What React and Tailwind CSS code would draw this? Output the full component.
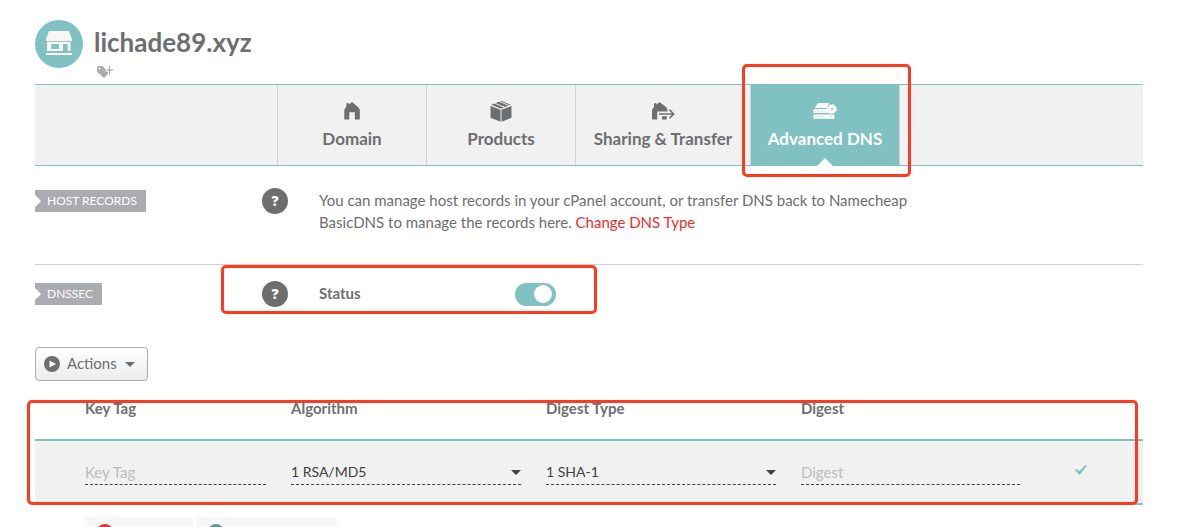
import React, { useState } from "react";

const StoreIcon = () => (
  <svg viewBox="0 0 48 48" className="size-12 shrink-0" aria-hidden="true">
    <circle cx="24" cy="24" r="24" fill="#80c2c1" />
    <g fill="#f9f6f3">
      <path d="M14 11h20l3 8.500v1.200q-1.100 1.300-2.200 0-1.100 1.300-2.200 0-1.100 1.300-2.200 0-1.100 1.300-2.200 0-1.100 1.300-2.200 0-1.100 1.300-2.200 0-1.100 1.300-2.200 0-1.100 1.300-2.200 0-1.100 1.300-2.200 0-1.100 1.300-2.200 0-1.100 1.300-2.200 0-1.100 1.300-1.800 0v-1.200z" />
      <path fillRule="evenodd" d="M12 22h23.500v9H12zM16.300 24v5H24v-5zM28 24v7h4.700v-7z" />
      <path d="M11 33h26v2H11z" />
    </g>
  </svg>
);

const TagPlusIcon = () => (
  <svg viewBox="0 0 17 12" className="h-3 w-[17px]" aria-hidden="true">
    <path fill="#abacb0" fillRule="evenodd" d="M0 1 1 0h4.500l2.800 2.800L11 6.500v1.300L7 12 .5 6.200 0 5zM2.400 1.600a1 1 0 1 0 0 2 1 1 0 0 0 0-2z" />
    <path stroke="#fff" strokeWidth="3" d="M12.500 0v9M8.600 4.200h8" />
    <path stroke="#abacb0" strokeWidth="1.200" d="M12.500 0v8.500M8.800 4.200h7.400" />
  </svg>
);

const HomeIcon = () => (
  <svg viewBox="0 0 16 18" className="h-[18px] w-4" aria-hidden="true">
    <path fill="currentColor" d="M2.300 1.200h2.600v1.300L8 0l6.300 5.200 1.500 2.300V17.500h-5V10.200H5.300v7.300H.3V7.500L2.300 5z" />
  </svg>
);

const BoxIcon = () => (
  <svg viewBox="0 0 22 22" className="size-[22px]" aria-hidden="true">
    <g fill="currentColor">
      <path d="M.5 5.900 10.500 9.800v12L.5 17.800zM21.500 5.900 11.500 9.800v12l10-4z" />
      <path d="m1.300 4.800 3-1.200 9.400 3.900L11 8.700zM5.600 3.100l3.200-1.300L18.200 5.600l-3.200 1.400zM10 1.300l1-.5 9.700 3.900-1.300.6z" />
    </g>
  </svg>
);

const TransferIcon = () => (
  <svg viewBox="0 0 24 18" className="h-[18px] w-6" aria-hidden="true">
    <path fill="currentColor" d="M3 1.200h2.500v1.500L8.500 0l6.800 5.200 1.100 2.600v1.700H6.200v8H1V7.800L3 5zM11 14.200h4.800v3.300H11z" />
    <path fill="none" stroke="currentColor" strokeWidth="1.600" d="M8 12h14.500M18.500 7.700l4.200 4.300-4.200 4.300" />
  </svg>
);

const ServerIcon = () => (
  <svg viewBox="0 0 24 18" className="h-[18px] w-6" aria-hidden="true">
    <g fill="currentColor">
      <path d="M5 1h11l-2 5H1.500zM.5 7h14l3 4H.5zM.5 12.500h20.800v4.300H.5z" />
      <circle cx="19" cy="7" r="4.300" />
      <circle cx="19" cy="7" r="4.500" fill="none" stroke="currentColor" strokeWidth="1" strokeDasharray="1.800 1.735" />
    </g>
    <path stroke="#80c2c1" strokeWidth="1" strokeDasharray="1 1.600" d="M2.500 9h8M2.500 14.600h8M17 14.600h2" />
    <circle cx="19" cy="7" r="1" fill="#80c2c1" />
  </svg>
);

const tabs = [
  { label: "Domain", icon: HomeIcon, width: "w-[149px]" },
  { label: "Products", icon: BoxIcon, width: "w-[149px]" },
  { label: "Sharing & Transfer", icon: TransferIcon, width: "w-[175px]" },
  { label: "Advanced DNS", icon: ServerIcon, width: "w-[150px]", active: true },
];

const Highlight = ({ className }) => (
  <div aria-hidden="true" className={`pointer-events-none absolute z-10 rounded-[5px] border-3 border-[#ff3b1f] ${className}`} />
);

const SectionLabel = ({ children }) => (
  <h2 className="flex h-[22px] items-center bg-[#abacb0] pr-[9px] text-[12px] text-white">
    <svg viewBox="0 0 6 12" className="mr-[6px] h-3 w-[6px]" aria-hidden="true">
      <path d="M0 0 6 6 0 12z" fill="#fff" />
    </svg>
    {children}
  </h2>
);

const HelpButton = () => (
  <button type="button" aria-label="Help" className="flex size-[26px] items-center justify-center rounded-full bg-[#6d6e70] pb-[2px] font-['Open_Sans',sans-serif] text-[14px] font-extrabold text-white">
    ?
  </button>
);

const SelectField = ({ id, label, options }) => (
  <div className="relative w-[230px]">
    <select id={id} aria-label={label} className="h-6 w-full appearance-none border-b border-dashed border-[#414042] bg-transparent pb-1 text-[14px] text-[#414042]">
      {options.map((o) => (
        <option key={o}>{o}</option>
      ))}
    </select>
    <svg viewBox="0 0 10 5" className="pointer-events-none absolute top-[10px] right-0 h-[5px] w-[10px]" aria-hidden="true">
      <path d="M0 0h10L5 5z" fill="#414042" />
    </svg>
  </div>
);

const inputClass =
  "block h-[26px] border-b border-dashed border-[#414042] bg-transparent text-[15px] text-[#414042] placeholder:text-[#bcbcbc]";

export default function App() {
  const [enabled, setEnabled] = useState(true);

  return (
    <div className="h-screen overflow-hidden bg-white pt-5 pr-10 pl-[35px] font-['Lato',sans-serif] text-[15px] text-[#6d6e70]">
      <header className="flex h-16 gap-[11px]">
        <StoreIcon />
        <div className="flex flex-col pt-[7px]">
          <h1 className="text-[26px] leading-[30px] font-bold">lichade89.xyz</h1>
          <button type="button" aria-label="Add tag" className="mt-[9px] ml-[3px] w-fit">
            <TagPlusIcon />
          </button>
        </div>
      </header>

      <nav className="flex h-[82px] border-y border-[#80c2c1] bg-[#f1f1f1] pl-[242px]">
        {tabs.map(({ label, icon: Icon, width, active }) => (
          <a
            key={label}
            href="#"
            className={`relative flex flex-col items-center border-l border-[#d1d2d4] pt-[15px] text-[17px] font-bold ${width} ${active ? "border-r bg-[#80c2c1] text-white" : ""}`}
          >
            <span className="flex h-[22px] items-center">
              <Icon />
            </span>
            <span className="mt-[5px] leading-6 whitespace-nowrap">{label}</span>
            {active && (
              <>
                <svg viewBox="0 0 16 8" className="absolute -bottom-px left-1/2 h-2 w-4 -translate-x-1/2" aria-hidden="true">
                  <path d="M0 8 8 0l8 8z" fill="#fff" />
                </svg>
                <Highlight className="-top-[21px] -right-3 -bottom-3 -left-[9px]" />
              </>
            )}
          </a>
        ))}
      </nav>

      <section className="flex h-[99px] items-start border-b border-[#d1d2d4] pt-6">
        <div className="flex w-[227px] shrink-0">
          <SectionLabel>HOST RECORDS</SectionLabel>
        </div>
        <div className="-mt-[2px] w-[57px] shrink-0">
          <HelpButton />
        </div>
        <p className="-mt-px max-w-[600px] leading-[22px]">
          You can manage host records in your cPanel account, or transfer DNS back to Namecheap BasicDNS to manage the
          records here.{" "}
          <a href="#" className="text-[#ee2e2c]">
            Change DNS Type
          </a>
        </p>
      </section>

      <section className="relative flex items-center pt-4 pb-10">
        <Highlight className="top-0 left-[186px] h-[49px] w-[376px]" />
        <div className="flex w-[227px] shrink-0">
          <SectionLabel>DNSSEC</SectionLabel>
        </div>
        <div className="w-[57px] shrink-0">
          <HelpButton />
        </div>
        <label htmlFor="dnssec-status" className="w-[196px] pb-[2px] font-bold">
          Status
        </label>
        <input
          id="dnssec-status"
          type="checkbox"
          role="switch"
          checked={enabled}
          onChange={() => setEnabled(!enabled)}
          className="flex h-[23px] w-[41px] appearance-none items-center rounded-full bg-[#c4c4c4] px-1 before:size-[18px] before:rounded-full before:bg-white checked:justify-end checked:bg-[#80c2c1]"
        />
      </section>

      <button type="button" className="flex h-[34px] w-[113px] items-center rounded border border-[#abacb0] bg-linear-to-b from-white to-[#ececec] pl-2">
        <svg viewBox="0 0 16 16" className="size-4" aria-hidden="true">
          <circle cx="8" cy="8" r="8" fill="#6d6e70" />
          <path d="M5.500 4.500v7L12 8z" fill="#fff" />
        </svg>
        <span className="ml-[7px] pb-[2px]">Actions</span>
        <svg viewBox="0 0 10 5" className="ml-2 h-[5px] w-[10px]" aria-hidden="true">
          <path d="M0 0h10L5 5z" fill="#6d6e70" />
        </svg>
      </button>

      <div className="relative mt-4">
        <Highlight className="top-[3px] right-[5px] -left-2 h-[105px]" />
        <table className="w-full table-fixed border-collapse text-left">
          <colgroup>
            <col className="w-[50px]" />
            <col className="w-[206px]" />
            <col className="w-[255px]" />
            <col className="w-[255px]" />
            <col />
            <col className="w-[69px]" />
          </colgroup>
          <thead>
            <tr className="h-[43px] border-b-2 border-[#80c2c1] align-top leading-[22px]">
              <td />
              <th scope="col">Key Tag</th>
              <th scope="col">Algorithm</th>
              <th scope="col">Digest Type</th>
              <th scope="col">Digest</th>
              <td />
            </tr>
          </thead>
          <tbody>
            <tr className="h-16 border-b-2 border-[#80c2c1] bg-[#f1f1f1]">
              <td />
              <td>
                <input aria-label="Key Tag" placeholder="Key Tag" className={`${inputClass} w-[181px]`} />
              </td>
              <td>
                <SelectField id="algorithm" label="Algorithm" options={["1 RSA/MD5"]} />
              </td>
              <td>
                <SelectField id="digest-type" label="Digest Type" options={["1 SHA-1"]} />
              </td>
              <td>
                <input aria-label="Digest" placeholder="Digest" className={`${inputClass} w-[219px]`} />
              </td>
              <td>
                <button type="button" aria-label="Save" className="block pb-1">
                  <svg viewBox="0 0 14 12" className="h-3 w-[14px]" aria-hidden="true">
                    <path d="M1 6.300 2.800 4.800 5 7.200 11.300 1 13 1.700 5.500 11z" fill="#80c2c1" />
                  </svg>
                </button>
              </td>
            </tr>
          </tbody>
        </table>
      </div>

      <div className="mt-3 flex gap-1 pl-[50px]">
        <button type="button" aria-label="Remove" className="h-[30px] w-[108px] rounded bg-[#f8f8f8] pl-3">
          <span className="block size-4 rounded-full bg-[#ee2e2c]" />
        </button>
        <button type="button" aria-label="Add new record" className="h-[30px] w-[140px] rounded bg-[#f8f8f8] pl-[11px]">
          <span className="block size-4 rounded-full bg-[#649597]" />
        </button>
      </div>
    </div>
  );
}
